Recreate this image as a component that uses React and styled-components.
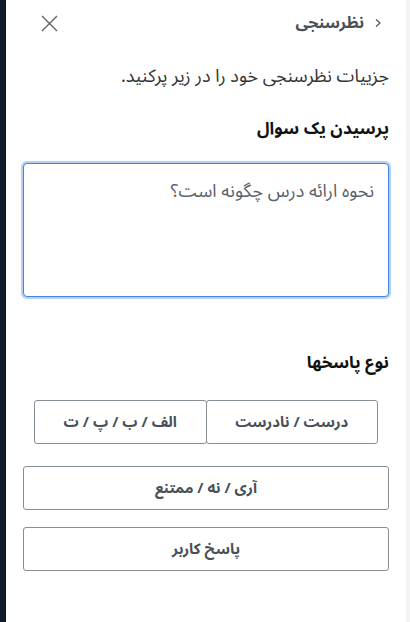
import styled, { createGlobalStyle } from "styled-components";

const Global = createGlobalStyle`
  html, body { margin: 0; padding: 0; height: 100%; }
  body {
    background: #0d1b2a;
    font-family: "Noto Sans Arabic", "DejaVu Sans", "Noto Sans", sans-serif;
  }
`;

const Shell = styled.div`
  display: flex;
  height: 622px;
  background: #0d1b2a;
  padding-left: 6px;
`;

const Panel = styled.div`
  flex: 1;
  background: #fff;
  direction: rtl;
  padding: 0 17px;
  display: flex;
  flex-direction: column;
`;

const Gutter = styled.div`
  width: 4px;
  background: #f3f4f6;
`;

const Header = styled.div`
  display: flex;
  align-items: center;
  justify-content: space-between;
  height: 44px;
  padding-top: 1px;
`;

const Back = styled.div`
  display: flex;
  align-items: center;
  gap: 9px;
  font-size: 16px;
  line-height: 24px;
  font-weight: bold;
  color: #495057;
  margin-right: 6px;
`;

const Close = styled.button`
  border: 0;
  background: none;
  padding: 0;
  margin-left: 18px;
  display: flex;
  cursor: pointer;
`;

const Lead = styled.p`
  margin: 19px 0 0;
  font-size: 18px;
  line-height: 24px;
  color: #333;
`;

const Heading = styled.h3`
  margin: ${(p) => p.top}px 0 0;
  font-size: 17px;
  line-height: 24px;
  font-weight: bold;
  color: #111;
`;

const Area = styled.textarea`
  margin-top: 22px;
  height: 134px;
  box-sizing: border-box;
  border: 1.5px solid #3f86e0;
  border-radius: 4px;
  box-shadow: 0 0 0 2px rgba(90, 150, 230, 0.45);
  padding: 8px 14px;
  font-family: inherit;
  font-size: 18px;
  color: #495057;
  resize: none;
  outline: none;
  &::placeholder { color: #5a6169; }
`;

const Group = styled.div`
  display: flex;
  margin: 25px 11px 0;
`;

const Choice = styled.button`
  height: 44px;
  background: #fff;
  border: 1px solid #868e96;
  border-radius: 3px;
  font-family: inherit;
  font-size: 15px;
  font-weight: bold;
  color: #495057;
  cursor: pointer;
  margin-top: ${(p) => p.top || 0}px;
`;

const Split = styled(Choice)`
  flex: 1;
  & + & { margin-right: -1px; }
`;

const List = styled.div`
  display: flex;
  flex-direction: column;
`;

export default function App() {
  return (
    <>
      <Global />
      <Shell>
        <Panel>
          <Header>
            <Back>
              <svg width="10" height="10" viewBox="0 0 10 10">
                <path d="M3 1.5 L7 5 L3 8.5" fill="none" stroke="#555" strokeWidth="1.2" />
              </svg>
              نظرسنجی
            </Back>
            <Close aria-label="close">
              <svg width="17" height="17" viewBox="0 0 17 17">
                <path d="M1 1 L16 16 M16 1 L1 16" stroke="#5f6368" strokeWidth="1.4" />
              </svg>
            </Close>
          </Header>
          <Lead>جزییات نظرسنجی خود را در زیر پرکنید.</Lead>
          <Heading top={29}>پرسیدن یک سوال</Heading>
          <Area placeholder="نحوه ارائه درس چگونه است؟" />
          <Heading top={54}>نوع پاسخها</Heading>
          <Group>
            <Split>درست / نادرست</Split>
            <Split>الف / ب / پ / ت</Split>
          </Group>
          <List>
            <Choice top={22}>آری / نه / ممتنع</Choice>
            <Choice top={17}>پاسخ کاربر</Choice>
          </List>
        </Panel>
        <Gutter />
      </Shell>
    </>
  );
}
